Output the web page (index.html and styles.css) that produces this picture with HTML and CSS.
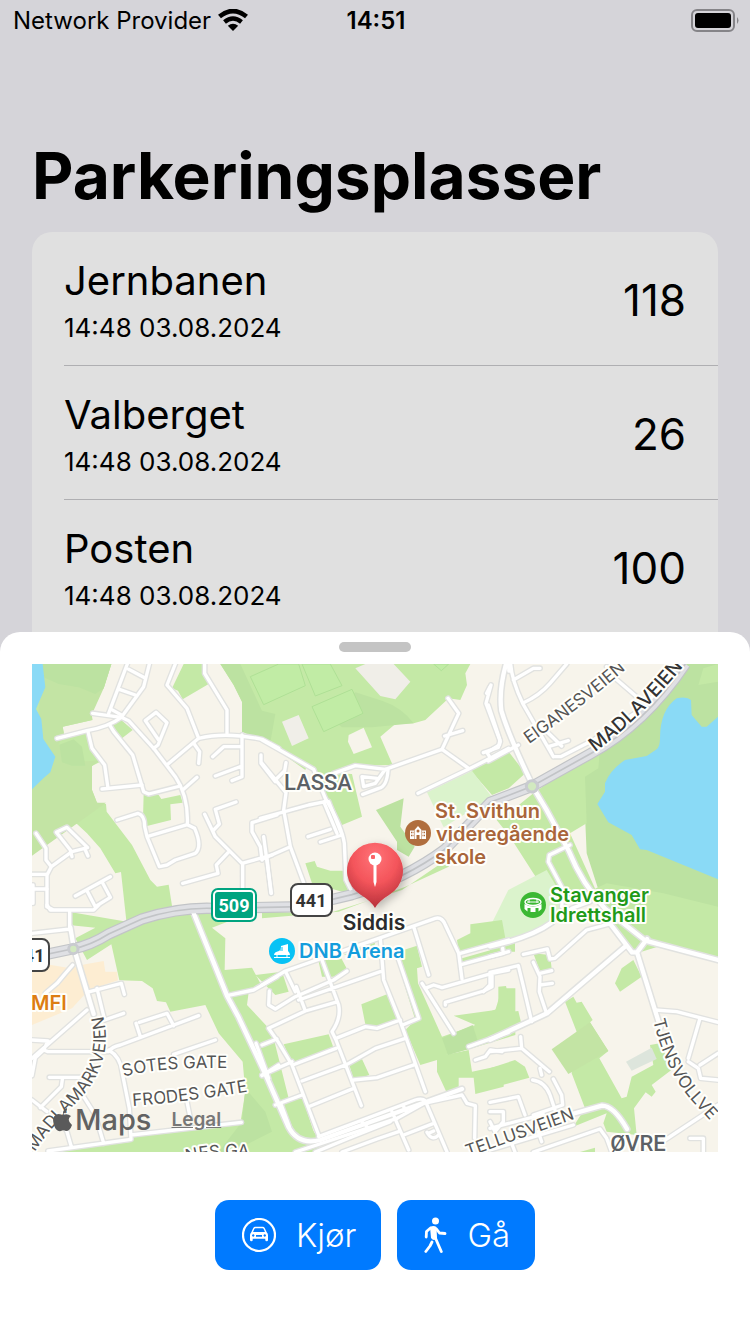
FILE: index.html
```html
<!DOCTYPE html>
<html lang="nb">
<head>
    <meta charset="UTF-8">
    <meta name="viewport" content="width=device-width, initial-scale=1.0">
    <title>Parkeringsplasser</title>
    <link rel="stylesheet" href="styles.css">
</head>
<body>
<div class="screen">
    <div class="status-bar">
        <div class="carrier">
            <span>Network Provider</span>
            <svg class="wifi" viewBox="0 0 30 22" aria-hidden="true">
                <path d="M1.500 7.600Q15-3.600 28.500 7.600" fill="none" stroke="#000" stroke-width="4.600"/>
                <path d="M6.500 13Q15 6 23.500 13" fill="none" stroke="#000" stroke-width="4.400"/>
                <path d="M15 22l-5.200-5.300q5.200-4 10.400 0z"/>
            </svg>
        </div>
        <time class="clock">14:51</time>
        <svg class="battery" viewBox="0 0 48 23" aria-hidden="true">
            <rect x="1" y="1" width="42" height="21" rx="5" fill="none" stroke="#858488" stroke-width="2"/>
            <rect x="4" y="4" width="36" height="15" rx="3"/>
            <path d="M46 8q3 3.500 0 7z" fill="#858488"/>
        </svg>
    </div>

    <main class="content">
        <h1>Parkeringsplasser</h1>
        <ul class="lots">
            <li class="lot">
                <div>
                    <h2>Jernbanen</h2>
                    <p>14:48 03.08.2024</p>
                </div>
                <span class="free">118</span>
            </li>
            <li class="lot">
                <div>
                    <h2>Valberget</h2>
                    <p>14:48 03.08.2024</p>
                </div>
                <span class="free">26</span>
            </li>
            <li class="lot">
                <div>
                    <h2>Posten</h2>
                    <p>14:48 03.08.2024</p>
                </div>
                <span class="free">100</span>
            </li>
        </ul>
    </main>

    <section class="sheet">
        <div class="grabber"></div>
        <div class="map">
            <svg class="map-canvas" viewBox="0 0 686 488">
                <defs>
                    <radialGradient id="pin-red" cx="50%" cy="22%" r="80%">
                        <stop offset="0" stop-color="#ff7378"/>
                        <stop offset="0.500" stop-color="#f4555b"/>
                        <stop offset="1" stop-color="#b22e38"/>
                    </radialGradient>
                    <filter id="pin-shadow" x="-30%" y="-20%" width="170%" height="150%">
                        <feDropShadow dx="3" dy="3" stdDeviation="4" flood-opacity="0.250"/>
                    </filter>

                    <!-- local streets, one group per map tile -->
                    <g id="streets">
                        <g transform="translate(0 -12)">
                            <path d="M75 235L165 212Q230 200 268 172L335 80L352 12"/>
                            <path d="M286 12L230 160M290 28L335 52M262 88L310 105M238 148L268 165"/>
                            <path d="M182 160L268 172L290 182L365 265L430 350Q470 410 466 494"/>
                            <path d="M340 182L372 157L405 188L378 255L365 265M340 182L380 240"/>
                            <path d="M168 215L180 265L218 315L228 385M210 387L330 375"/>
                            <path d="M233 195L245 215L302 285L335 395L350 402L445 378"/>
                            <path d="M430 12L405 75L465 145L500 235M408 312L500 235Q580 215 690 238L740 265"/>
                            <path d="M518 12V40L585 150V220M485 250L503 275L500 310M542 290L575 260H625M630 225V350L600 362M630 318L550 348M687 285V310L730 365"/>
                            <path d="M495 352L452 390M255 480L318 460Q338 465 338 500L345 530L382 620L405 615L430 600L490 580Q512 560 488 505L466 494L345 530"/>
                            <path d="M612 426L550 448L562 492L545 510M518 463L550 530L630 610L720 585M588 578L553 615L558 640L452 670M632 610V690"/>
                            <path d="M735 465L660 488V515L685 560L690 600M705 595L717 700"/>
                            <path d="M12 520L42 565V600L58 620M45 740V645L58 620L120 575L167 563L105 502L73 517L115 570L120 590M160 570L168 588"/>
                            <path d="M0 643H45M0 687H45M3 675V730M45 740L60 748M130 708L235 650M165 692L190 740L235 712L210 665"/>
                        </g>
                        <g transform="translate(690 -12)">
                            <path d="M0 240L155 328L190 415Q240 500 247 550L252 660L275 705"/>
                            <path d="M215 340L280 317L370 328L540 268L590 160L558 115M548 228L602 212M540 268L620 325M370 328L340 370L305 380L300 350L345 355M378 330Q375 380 350 385L302 403"/>
                            <path d="M468 400L625 325L684 295L740 265M684 292L675 278L712 255L715 245L672 130L687 75"/>
                            <path d="M0 310L72 398L65 450L85 560L125 668M72 308L68 332L40 360M-5 475L140 435L190 425M185 425L225 520M200 425L240 525L175 546M138 530L205 508M0 598L85 560M5 530L28 700"/>
                        </g>
                        <g transform="translate(1374 -12)">
                            <path d="M62 12Q65 60 98 130L190 290L212 290L310 240L450 150L550 45M70 60L130 25H150M98 130Q150 105 180 70L230 12M190 290L175 260L235 242M215 258L150 195M-5 135L30 240L25 262L-20 278M-5 303L85 255M350 20L370 50L440 110M-10 100L0 80"/>
                            <path d="M240 555L178 585L175 605L220 690L215 740L240 750M245 745L300 725"/>
                        </g>
                        <g transform="translate(0 723)">
                            <path d="M45 0L55 15H185L200 0M113 15V75M0 85L115 72M122 180Q100 205 75 235L40 265M165 262L268 235L277 268M165 315L0 460M0 405L48 408L35 435L48 440H230Q240 425 265 420L500 332M312 355L325 395M322 352L405 325L425 362M195 250L218 345L275 325M425 448L550 405"/>
                            <path d="M230 435Q265 455 270 500L292 610L297 700M297 690L628 652M297 703L48 738M52 517H145M92 517L88 545L25 608M155 575L190 630L215 715M80 640L105 680L118 725M0 585L45 620M465 590L475 640M0 512L10 458L35 435M585 272L665 255L735 215M672 415L710 520M690 512L740 480"/>
                        </g>
                        <g transform="translate(690 723)">
                            <path d="M0 240L70 198L350 100L520 40Q540 35 550 60L590 145L600 222M595 145L740 105M600 178L740 140M455 65L500 210M70 198L100 260M22 258L20 300L40 312L100 275L215 225L255 198"/>
                            <path d="M180 165L230 300Q238 340 210 380L222 405L298 602M20 370L48 410L90 480L170 690M20 370L130 318L220 292M110 285L355 200M103 245L130 318M355 100L365 225L415 350L490 560M410 165L470 340L422 360M222 400L310 365L345 370L415 345M0 420L45 402M92 480L222 430M120 528L255 478L340 430L430 400M275 525L345 518L460 478M145 603L275 550M0 510L90 470M40 600L120 570M58 600L82 665"/>
                            <path d="M480 235L575 385M495 248L515 240L540 248L690 205L740 195M690 205V245L665 258L550 292V300M620 425L740 382M640 465L670 455L685 435L720 440M170 695L460 585Q490 575 495 600L555 741M500 592L600 570L615 595L640 602L638 700M160 741L260 700L385 650M300 650L320 670M390 620L440 735M425 605L435 622M425 690L515 655M405 640L495 590M495 682Q510 710 530 690M500 685L515 678"/>
                            <path d="M100 741L405 640M240 741L345 702L410 680"/>
                        </g>
                        <g transform="translate(1374 723)">
                            <path d="M100 148L172 132L180 162L195 160L290 75L365 55M0 202L85 182L98 235L125 350M130 172L150 215L148 260L168 320M150 205L185 197M150 240L187 235M38 130L40 145L0 155M0 202V240L-20 260"/>
                            <path d="M495 315L560 320L684 352M630 340L595 460M684 445L630 480M595 470L625 490L632 520L684 525M0 440L95 430L92 395M95 430L178 500M155 510L150 490M128 525Q165 530 180 570L195 615M190 522L215 570L218 600L130 630M0 592L85 575L105 630M0 620H40V650L15 680L0 650M0 670L160 628"/>
                            <path d="M130 741L330 672L350 700L365 741M145 680L155 710M65 715L75 741M0 735L250 660M525 705L684 600M600 700H640V741"/>
                        </g>
                    </g>

                    <!-- collector streets, drawn wider -->
                    <g id="collectors">
                        <path d="M1422 0Q1400 80 1408 140Q1430 215 1500 360M1432 0V20"/>
                        <path d="M1500 365L1545 440L1610 560Q1650 660 1720 735L1840 830L2058 888"/>
                        <path d="M480 735L585 995L620 1060L700 1230L770 1390Q800 1445 865 1428L1290 1275"/>
                        <path d="M1374 847Q1500 820 1560 775M1374 1127L1545 1048L1780 847M1735 780L1800 865H1815L1845 825M1815 865L1885 1090"/>
                        <path d="M1620 1350L1710 1325Q1745 1325 1785 1395"/>
                        <path d="M115 790L125 850L185 1050"/>
                    </g>

                    <path id="trunk" d="M0 880L120 855Q175 845 230 810L330 765Q440 730 540 733L810 728L960 692Q1120 645 1240 555L1375 415L1500 367L1674 270Q1840 180 1960 0"/>

                    <!-- baselines for the road names -->
                    <path id="line-eiganes" d="M497 80Q550 43 599 1"/>
                    <path id="line-madlaveien" d="M563 88Q612 52 658-6"/>
                    <path id="line-madlamark" d="M3 488Q16 466 47 436Q85 395 69 345"/>
                    <path id="line-sotes" d="M92 413Q120 403 200 404"/>
                    <path id="line-frodes" d="M101 442Q155 438 225 426"/>
                    <path id="line-nes" d="M155 498Q190 488 260 496"/>
                    <path id="line-tellus" d="M436 493L548 453"/>
                    <path id="line-tjens" d="M621 356Q635 412 664 441L700 480"/>
                </defs>

                <g class="geometry" transform="scale(0.333333)">
                    <rect class="land" width="2058" height="1464"/>

                    <g class="park" transform="translate(0 -12)">
                        <path d="M0 12H238L215 85L195 100L178 160L182 180L92 200L96 222L168 212L205 305L180 318V390L195 428L222 432L224 455L300 555L355 660L375 680L410 674L430 800H285L267 636L250 640L205 565L165 520L135 492L90 476L45 490L0 520z"/>
                        <path d="M455 12H518L530 72L452 118L438 92L420 85zM238 192L268 180L302 210L270 235zM335 402L380 405L388 417L445 405L452 428L415 433L417 480L345 498L333 475z"/>
                        <path d="M565 12H1315L1300 40L1305 75L1285 120L1250 115L1180 180L1145 190L1090 192L1045 230L1082 315L970 317L905 340L960 342L990 470L930 495L890 420L840 330L812 300L815 285L842 268L820 330L700 245L630 215V125L605 75z"/>
                    </g>
                    <g class="park" transform="translate(690 -12)">
                        <path d="M130 610L158 603L165 620L205 632H250L275 705L150 670zM620 325L740 275L790 340L740 385L690 405zM200 760L420 690L560 595L570 580L560 620L430 680L230 755L0 775V755z"/>
                        <path class="park-deep" d="M342 450L425 415L415 500L458 560L440 590L405 570V545z"/>
                    </g>
                    <g class="park" transform="translate(1374 -12)">
                        <path class="park-deep" d="M590 12H684V900L460 840L340 735L290 580L280 350L300 280L450 180z"/>
                        <path d="M130 400L300 280L330 270L325 325L285 350L290 490L240 520L340 740L460 840L684 900V740L520 700L350 670L200 740L130 640L60 530L20 480L80 440zM640 25L684 12V65L625 75z"/>
                        <path class="park-pale" d="M55 690L170 630L235 740L160 800L0 860V800z"/>
                    </g>
                    <path class="park-pale" d="M1185 385L1320 320L1380 400L1235 490z"/>
                    <g class="park" transform="translate(0 723)">
                        <path d="M285 50L440 12H580L600 45L540 68L580 100L578 195L660 188L685 235L750 210L650 262L645 300L720 380L770 580L860 700V741H45L300 710V690L625 655L640 560L632 470L560 385L520 300L415 320L402 292L375 288L362 250L330 228L262 226L238 118L165 165L130 100L190 68L110 60V20z"/>
                        <path class="park-deep" d="M640 550L700 620L720 680L600 741H560L630 650z"/>
                        <path class="mall" d="M0 170L115 190L160 178L215 168L220 200L255 200L258 226L170 255L120 310L0 360z"/>
                    </g>
                    <g class="park" transform="translate(690 723)">
                        <path d="M-20 210L60 200L80 260L40 270zM170 170L230 145L255 192L215 215H180zM245 150L340 112L330 145zM408 140L465 122L480 185L465 190L468 235L540 395L640 360L575 332L700 315L720 250H760V390L630 430L550 450L620 435L630 500L725 480V545L640 567L635 518H590V565H555L525 500V465L475 480L430 375L460 345L415 200zM298 298L375 268L405 345L345 370L310 358zM65 418L200 388L215 430L90 475zM262 480L300 462L322 510L275 525zM0 425L20 440L75 575L40 590L0 510zM60 600L120 572L168 720L90 700zM585 105L625 85V58L720 45L730 100L590 140zM600 160L740 120V140L600 175z"/>
                        <path class="park-deep" d="M540 400L632 360L648 410L620 432L558 450z"/>
                        <path class="land" d="M115 205L160 180L172 215L105 240z"/>
                    </g>
                    <g class="park" transform="translate(1374 723)">
                        <path d="M365 55L430 60L455 110L520 120L440 145L415 130zM375 235L395 190L430 165L455 215L390 260zM225 290L250 275L260 293L275 290L308 345L300 352L355 438L328 460L395 580L410 575L425 515L490 480L480 420L510 415L548 492L485 540L497 560L485 575L467 562L432 610L440 690L350 680L340 655L350 625L250 665L285 610L245 505L260 380zM130 145L180 150L185 190L150 200zM0 320L25 310V245L48 243L65 320L85 318L95 360L0 395zM0 490L75 465L105 485L118 518L0 550zM0 85L75 115V140H0zM270 741L315 728V741z"/>
                        <path class="park-dull" d="M185 433L300 352L355 438L235 507z"/>
                        <path class="building" d="M408 470L485 428L500 462L425 497z"/>
                    </g>

                    <!-- shades inside the parks and the pitches -->
                    <path class="park-dull" d="M32 0H238L215 73L180 150V168L92 188L96 210L80 240L95 295L200 290L180 306V378L195 416H222L0 575V380z"/>
                    <path class="park-deep" d="M32 0H238L215 73L190 90L140 70L80 60L35 40zM82 242L125 226L150 248L160 305L120 305L90 295zM565 0H625L690 140L730 150L715 235L630 203V113L605 63zM880 150L970 85L1050 110Q1110 130 1145 178L1020 190H930z"/>
                    <g class="pitch">
                        <path d="M655 38L740 0H800L820 65L695 122zM810 0H895L930 65L850 96zM840 128L960 76L993 148L875 203zM1205 0L1228 20L1250 0z"/>
                    </g>
                    <g class="plot" transform="translate(690 -12)">
                        <path d="M280 25L310 12H395L445 65L400 118L355 108zM60 185L110 165L140 235L90 258z"/>
                        <path class="land" d="M260 225L305 203L330 262L275 282L258 245z"/>
                    </g>

                    <path class="water" d="M0 0H32L40 70L12 135L28 165L34 225L70 278L55 325L35 342L0 376z"/>
                    <path class="water" transform="translate(1374 -12)" d="M684 170L650 200H635L605 165L603 120Q590 108 560 115Q510 150 510 235Q510 260 500 268L470 288L405 300Q360 330 345 370V395L322 432L355 487L425 525L450 568L470 570L684 658z"/>

                    <use href="#streets" class="road-edge street-edge"/>
                    <use href="#collectors" class="road-edge collector-edge"/>
                    <use href="#trunk" class="trunk-edge"/>
                    <use href="#streets" class="road street"/>
                    <use href="#collectors" class="road collector"/>
                    <use href="#trunk" class="trunk"/>
                    <use href="#trunk" class="trunk-line"/>
                    <circle class="roundabout" cx="1500" cy="367" r="17"/>
                    <circle class="roundabout" cx="124" cy="855" r="14"/>
                </g>

                <g class="road-name">
                    <text><textPath href="#line-eiganes">EIGANESVEIEN</textPath></text>
                    <text class="road-name-main"><textPath href="#line-madlaveien">MADLAVEIEN</textPath></text>
                    <text><textPath href="#line-madlamark">MADLAMARKVEIEN</textPath></text>
                    <text><textPath href="#line-sotes">SOTES GATE</textPath></text>
                    <text><textPath href="#line-frodes">FRODES GATE</textPath></text>
                    <text><textPath href="#line-nes">NES GA</textPath></text>
                    <text><textPath href="#line-tellus">TELLUSVEIEN</textPath></text>
                    <text><textPath href="#line-tjens">TJENSVOLLVE</textPath></text>
                </g>

                <g class="district">
                    <text x="286" y="126" text-anchor="middle">LASSA</text>
                    <text x="606" y="487" text-anchor="middle">ØVRE</text>
                </g>

                <g class="shield">
                    <rect x="180" y="225" width="44" height="32" rx="6" fill="#00a480" stroke="#00a480" stroke-width="2"/>
                    <rect x="182" y="227" width="40" height="28" rx="4" fill="none" stroke="#fff" stroke-width="2"/>
                    <text x="202" y="248" fill="#fff">509</text>
                    <rect x="259" y="220" width="41" height="32" rx="7" fill="#fff" stroke="#444" stroke-width="2"/>
                    <text x="279" y="243" fill="#333">441</text>
                    <rect x="-24" y="275" width="41" height="32" rx="7" fill="#fff" stroke="#444" stroke-width="2"/>
                    <text x="-3" y="298" fill="#333">441</text>
                </g>

                <g class="poi">
                    <g fill="#a9653a">
                        <text x="403" y="154">St. Svithun</text>
                        <text x="404" y="177">videregående</text>
                        <text x="403" y="200">skole</text>
                    </g>
                    <g fill="#219a18">
                        <text x="518" y="238">Stavanger</text>
                        <text x="518" y="258">Idrettshall</text>
                    </g>
                    <text x="267" y="294" fill="#139ddd">DNB Arena</text>
                    <text x="-1" y="346" fill="#dd7d12">MFI</text>
                    <text x="342" y="266" fill="#2b2b2b" text-anchor="middle" class="poi-selected">Siddis</text>
                </g>

                <g transform="translate(386 169)">
                    <circle r="13" fill="#b06e3e"/>
                    <path d="M-8-2.500h4V6h-4zM4-2.500h4V6H4zM-3.500-3L0-7L3.500-3V6H1.500V2h-3v4h-2z" fill="#fff"/>
                    <path d="M-7-.500h1M-5.500-.500h1M-7 2.500h1M-5.500 2.500h1M4.500-.500h1M6-.500h1M4.500 2.500h1M6 2.500h1" stroke="#b06e3e" stroke-width="1.500"/>
                    <circle cy="-2" r="1.500" fill="#b06e3e"/>
                </g>
                <g transform="translate(501 241)">
                    <circle r="13" fill="#3bb833"/>
                    <ellipse cy="-3" rx="8" ry="3.500" fill="none" stroke="#fff" stroke-width="1.500"/>
                    <path d="M-8.500-1q8.500 5 17 0v5l-3 2.500V3h-3v4h-5V3h-3v3.500l-3-2.500z" fill="#fff"/>
                    <path d="M-6-3H6M-4-6v4M4-6v4" fill="none" stroke="#fff"/>
                </g>
                <g transform="translate(250 287)">
                    <circle r="13" fill="#08c2f5"/>
                    <path d="M-1-5L6-7V0Q8 2 8 4H-8Q-8 1-3 0Q-1-1-1-5z" fill="#fff"/>
                    <path d="M-8 6.500H8M-5 4v3M5 4v3" stroke="#fff" stroke-width="1"/>
                    <path d="M-1.500-3h2.500M-2-1h3" stroke="#08c2f5"/>
                </g>

                <g transform="translate(343 206)">
                    <path d="M0 38Q-4 31-14 25A28 28 0 1 1 14 25Q4 31 0 38z" fill="url(#pin-red)" filter="url(#pin-shadow)"/>
                    <circle cy="-11" r="6.500" fill="#fff"/>
                    <path d="M-1.500-6h3V12L0 17L-1.500 12z" fill="#fff"/>
                    <rect x="-4" y="-15" width="4" height="4" rx="1" fill="#fa6469"/>
                </g>
            </svg>
            <div class="attribution">
                <svg class="apple" viewBox="0 0 20 24" aria-hidden="true">
                    <path d="M14 0q.5 4-4 6Q9.500 2 14 0zM10 7q4-2 8 1-5 4 1 9-2 6-6 6-3-1.500-5 0Q3 24 1 17-2 8 5 6q2 0 5 1z"/>
                </svg>
                <span class="maps">Maps</span>
                <a class="legal" href="#legal">Legal</a>
            </div>
        </div>
        <div class="actions">
            <button type="button">
                <svg class="icon-car" viewBox="0 0 34 34" aria-hidden="true">
                    <circle cx="17" cy="17" r="16" fill="none" stroke="#fff" stroke-width="2.200"/>
                    <path d="M9.800 15l2-4.500q.5-1 1.500-1h7.400q1 0 1.500 1l2 4.500" fill="none" stroke="#fff" stroke-width="1.500"/>
                    <path fill-rule="evenodd" d="M10 14h14q2 1 2 3v5q0 1.300-1.300 1.300T23.300 22v-1.200H10.700V22q0 1.300-1.300 1.300T8 22v-5q0-2 2-3zM11.200 16.300a1.200 1.200 0 1 0 .1 0zM22.700 16.300a1.200 1.200 0 1 0 .1 0zM14 17v1.700h6V17z" fill="#fff"/>
                </svg>
                Kjør
            </button>
            <button type="button">
                <svg class="icon-walk" viewBox="0 0 23 37" aria-hidden="true">
                    <circle cx="11.500" cy="3.900" r="3.500" fill="#fff"/>
                    <path d="M6 10Q9.500 8 12.500 10L13 21Q10 25 7 21z" fill="#fff"/>
                    <path d="M12.500 12L15.500 16L21 16.500M6.500 11L2.500 14.500L2.200 20M11 20L14 27L17.300 34.500M8 25L6 29L1.800 34.500" fill="none" stroke="#fff" stroke-width="2.800" stroke-linecap="round" stroke-linejoin="round"/>
                </svg>
                Gå
            </button>
        </div>
    </section>
</div>
</body>
</html>
```
FILE: styles.css
```css
* {
    box-sizing: border-box;
}
body {
    margin: 0;
    font-family: Inter, "Liberation Sans", sans-serif;
    color: #000;
}
h1, h2, p, ul {
    margin: 0;
    padding: 0;
}
.screen {
    position: relative;
    min-height: 100vh;
    overflow: hidden;
    background-color: #d5d4d9;
}

/* status bar */
.status-bar {
    display: grid;
    grid-template-columns: 1fr auto 1fr;
    align-items: center;
    height: 40px;
    padding: 0 11px 0 13px;
    font-size: 24px;
}
.carrier {
    display: flex;
    align-items: center;
    gap: 7px;
}
.wifi {
    width: 30px;
    height: 22px;
}
.clock {
    font-weight: 600;
}
.battery {
    width: 48px;
    height: 23px;
    justify-self: end;
}

/* list */
.content {
    padding: 96px 32px 0;
}
h1 {
    font-size: 64px;
    line-height: 80px;
    font-weight: 700;
}
.lots {
    margin-top: 16px;
    padding-left: 32px;
    list-style: none;
    background-color: #e0e0e0;
    border-radius: 20px 20px 0 0;
}
.lot {
    display: flex;
    align-items: center;
    justify-content: space-between;
    height: 134px;
    padding: 2px 32px 0 0;
    border-bottom: 1px solid #afafb2;
}
.lot:last-child {
    border-bottom: 0;
}
.lot h2 {
    font-size: 40px;
    line-height: 50px;
    font-weight: 400;
}
.lot p {
    margin-top: 6px;
    font-size: 26px;
    line-height: 32px;
}
.free {
    font-size: 44px;
}

/* bottom sheet */
.sheet {
    position: absolute;
    left: 0;
    right: 0;
    bottom: 0;
    padding: 10px 32px 64px;
    background-color: #fff;
    border-radius: 20px 20px 0 0;
}
.grabber {
    width: 72px;
    height: 10px;
    margin: 0 auto 12px;
    border-radius: 5px;
    background-color: #c4c4c4;
}
.map {
    position: relative;
}
.map-canvas {
    display: block;
    width: 100%;
    height: auto;
    overflow: hidden;
}

/* map colours */
.land { fill: #f7f4eb; }
.park { fill: #c4e9a6; }
.park-deep { fill: #bce2a1; }
.park-dull { fill: #c3e4a4; }
.park-pale { fill: #dbf3cc; }
.pitch { fill: #c1eca5; stroke: #afe096; stroke-width: 3; }
.plot { fill: #f0eee8; }
.mall { fill: #fdedd2; }
.building { fill: #dde5dc; }
.water { fill: #8adaf6; }
.road-edge, .road {
    fill: none;
    stroke-linecap: round;
    stroke-linejoin: round;
}
.road-edge { stroke: #e1e2e0; }
.road { stroke: #fff; }
.street-edge { stroke-width: 18px; }
.street { stroke-width: 10px; }
.collector-edge { stroke-width: 22px; }
.collector { stroke-width: 13px; }
.trunk-edge, .trunk, .trunk-line { fill: none; }
.trunk-edge { stroke: #c2c4c7; stroke-width: 34px; }
.trunk { stroke: #dfe0e4; stroke-width: 27px; }
.trunk-line { stroke: #c2c4c7; stroke-width: 5px; }
.roundabout { fill: #d2e9c0; stroke: #c9cbd0; stroke-width: 9px; }

/* map labels */
.map-canvas text {
    paint-order: stroke;
    stroke: #fffffb;
    stroke-width: 4px;
    stroke-linejoin: round;
}
.road-name {
    font-size: 17px;
    fill: #555;
}
.road-name-main {
    font-size: 19px;
    font-weight: 500;
    fill: #333;
}
.district {
    font-family: Roboto, sans-serif;
    font-size: 22px;
    font-weight: 500;
    fill: #5c6166;
}
.poi {
    font-size: 20px;
    font-weight: 600;
}
.poi-selected {
    font-size: 21px;
}
.map-canvas .shield text {
    font-family: Roboto, sans-serif;
    font-size: 18px;
    font-weight: 700;
    text-anchor: middle;
    stroke: none;
}
.attribution {
    position: absolute;
    left: 21px;
    bottom: 14px;
    display: flex;
    align-items: center;
    line-height: 36px;
    color: #626262;
}
.apple {
    width: 20px;
    height: 24px;
    fill: #5a5a5a;
}
.maps {
    margin-left: 2px;
    font-size: 29px;
    font-weight: 500;
}
.legal {
    margin-left: 20px;
    font-size: 19px;
    font-weight: 600;
    color: #777;
}

/* actions */
.actions {
    display: flex;
    justify-content: center;
    gap: 16px;
    margin-top: 48px;
}
button {
    display: flex;
    align-items: center;
    gap: 20px;
    height: 70px;
    padding: 0 25px 0 27px;
    border: 0;
    border-radius: 14px;
    background-color: #007aff;
    color: #fff;
    font-family: inherit;
    font-size: 33px;
    font-weight: 300;
}
.icon-car {
    width: 34px;
    height: 34px;
}
.icon-walk {
    width: 23px;
    height: 37px;
}
```
